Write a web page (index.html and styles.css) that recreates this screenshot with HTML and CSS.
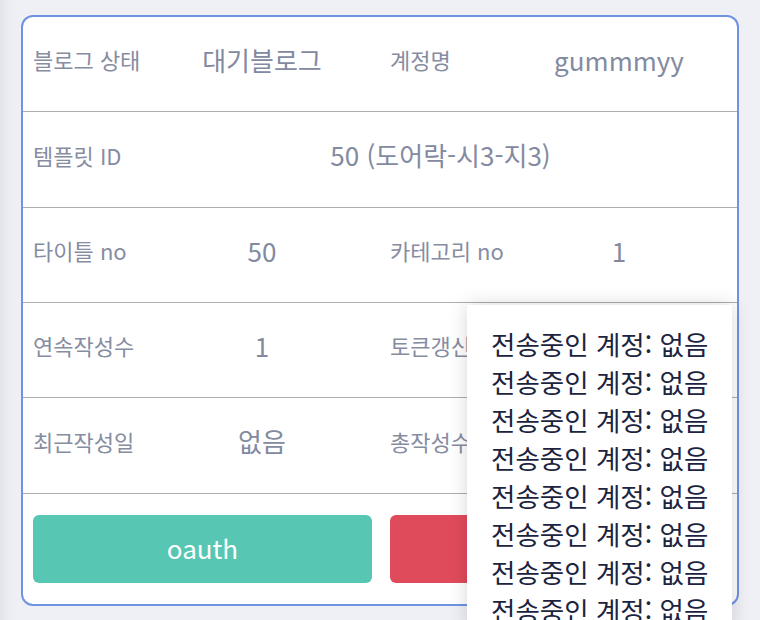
FILE: index.html
```html
<!DOCTYPE html>
<html lang="ko">
<head>
<meta charset="utf-8">
<title>블로그 정보</title>
<link rel="stylesheet" href="styles.css">
</head>
<body>
<div class="page">
  <div class="card">
    <div class="info-grid">
      <div class="cell label">블로그 상태</div>
      <div class="cell value">대기블로그</div>
      <div class="cell label">계정명</div>
      <div class="cell value">gummmyy</div>

      <div class="cell label">템플릿 ID</div>
      <div class="cell value wide">50 (도어락-시3-지3)</div>

      <div class="cell label">타이틀 no</div>
      <div class="cell value">50</div>
      <div class="cell label">카테고리 no</div>
      <div class="cell value">1</div>

      <div class="cell label">연속작성수</div>
      <div class="cell value">1</div>
      <div class="cell label">토큰갱신일</div>
      <div class="cell value">없음</div>

      <div class="cell label">최근작성일</div>
      <div class="cell value">없음</div>
      <div class="cell label">총작성수</div>
      <div class="cell value">0</div>
    </div>
    <div class="actions">
      <button class="btn btn-oauth">oauth</button>
      <button class="btn btn-delete">삭제</button>
    </div>
  </div>

  <div class="popup">
    <div class="popup-line">전송중인 계정: 없음</div>
    <div class="popup-line">전송중인 계정: 없음</div>
    <div class="popup-line">전송중인 계정: 없음</div>
    <div class="popup-line">전송중인 계정: 없음</div>
    <div class="popup-line">전송중인 계정: 없음</div>
    <div class="popup-line">전송중인 계정: 없음</div>
    <div class="popup-line">전송중인 계정: 없음</div>
    <div class="popup-line">전송중인 계정: 없음</div>
  </div>
</div>
</body>
</html>
```
FILE: styles.css
```css
html, body {
  margin: 0;
  height: 100%;
  overflow: hidden;
}

body {
  background: linear-gradient(to right, #e3e4e9 0, #eceef3 10px, #eff0f6 20px);
  font-family: "Noto Sans CJK KR", "Noto Sans", sans-serif;
}

.page {
  position: relative;
  padding: 15px 0 0 21px;
}

.card {
  box-sizing: border-box;
  width: 718px;
  height: 591px;
  background: #ffffff;
  border: 2px solid #6f92e2;
  border-radius: 12px;
  overflow: hidden;
}

.info-grid {
  display: grid;
  grid-template-columns: 121px 236px 121px 236px;
  grid-template-rows: 95px 96px 95px 95px 96px;
}

.cell {
  box-sizing: border-box;
  display: flex;
  align-items: center;
  border-bottom: 1px solid #adadad;
  color: #868ca1;
  padding-bottom: 10px;
}

.label {
  padding-left: 10px;
  font-size: 22px;
  font-weight: 400;
  white-space: nowrap;
}

.value {
  justify-content: center;
  font-size: 26px;
  font-weight: 400;
  color: #838aa0;
  white-space: nowrap;
}

.value.wide {
  grid-column: span 3;
}

.actions {
  display: flex;
  gap: 18px;
  padding: 21px 8px 0 10px;
}

.btn {
  flex: 1;
  height: 68px;
  border: none;
  border-radius: 6px;
  color: #ffffff;
  font-family: inherit;
  font-size: 26px;
  font-weight: 400;
  padding: 0 0 4px;
}

.btn-oauth {
  background: #57c7b4;
}

.btn-delete {
  background: #e04b5c;
}

.popup {
  position: absolute;
  left: 467px;
  top: 305px;
  width: 265px;
  box-sizing: border-box;
  padding: 20px 0 0 24px;
  background: #ffffff;
  box-shadow: 0 0 18px rgba(0, 0, 0, 0.16);
}

.popup-line {
  font-size: 26.5px;
  line-height: 38px;
  color: #1b2440;
  white-space: nowrap;
}
```
